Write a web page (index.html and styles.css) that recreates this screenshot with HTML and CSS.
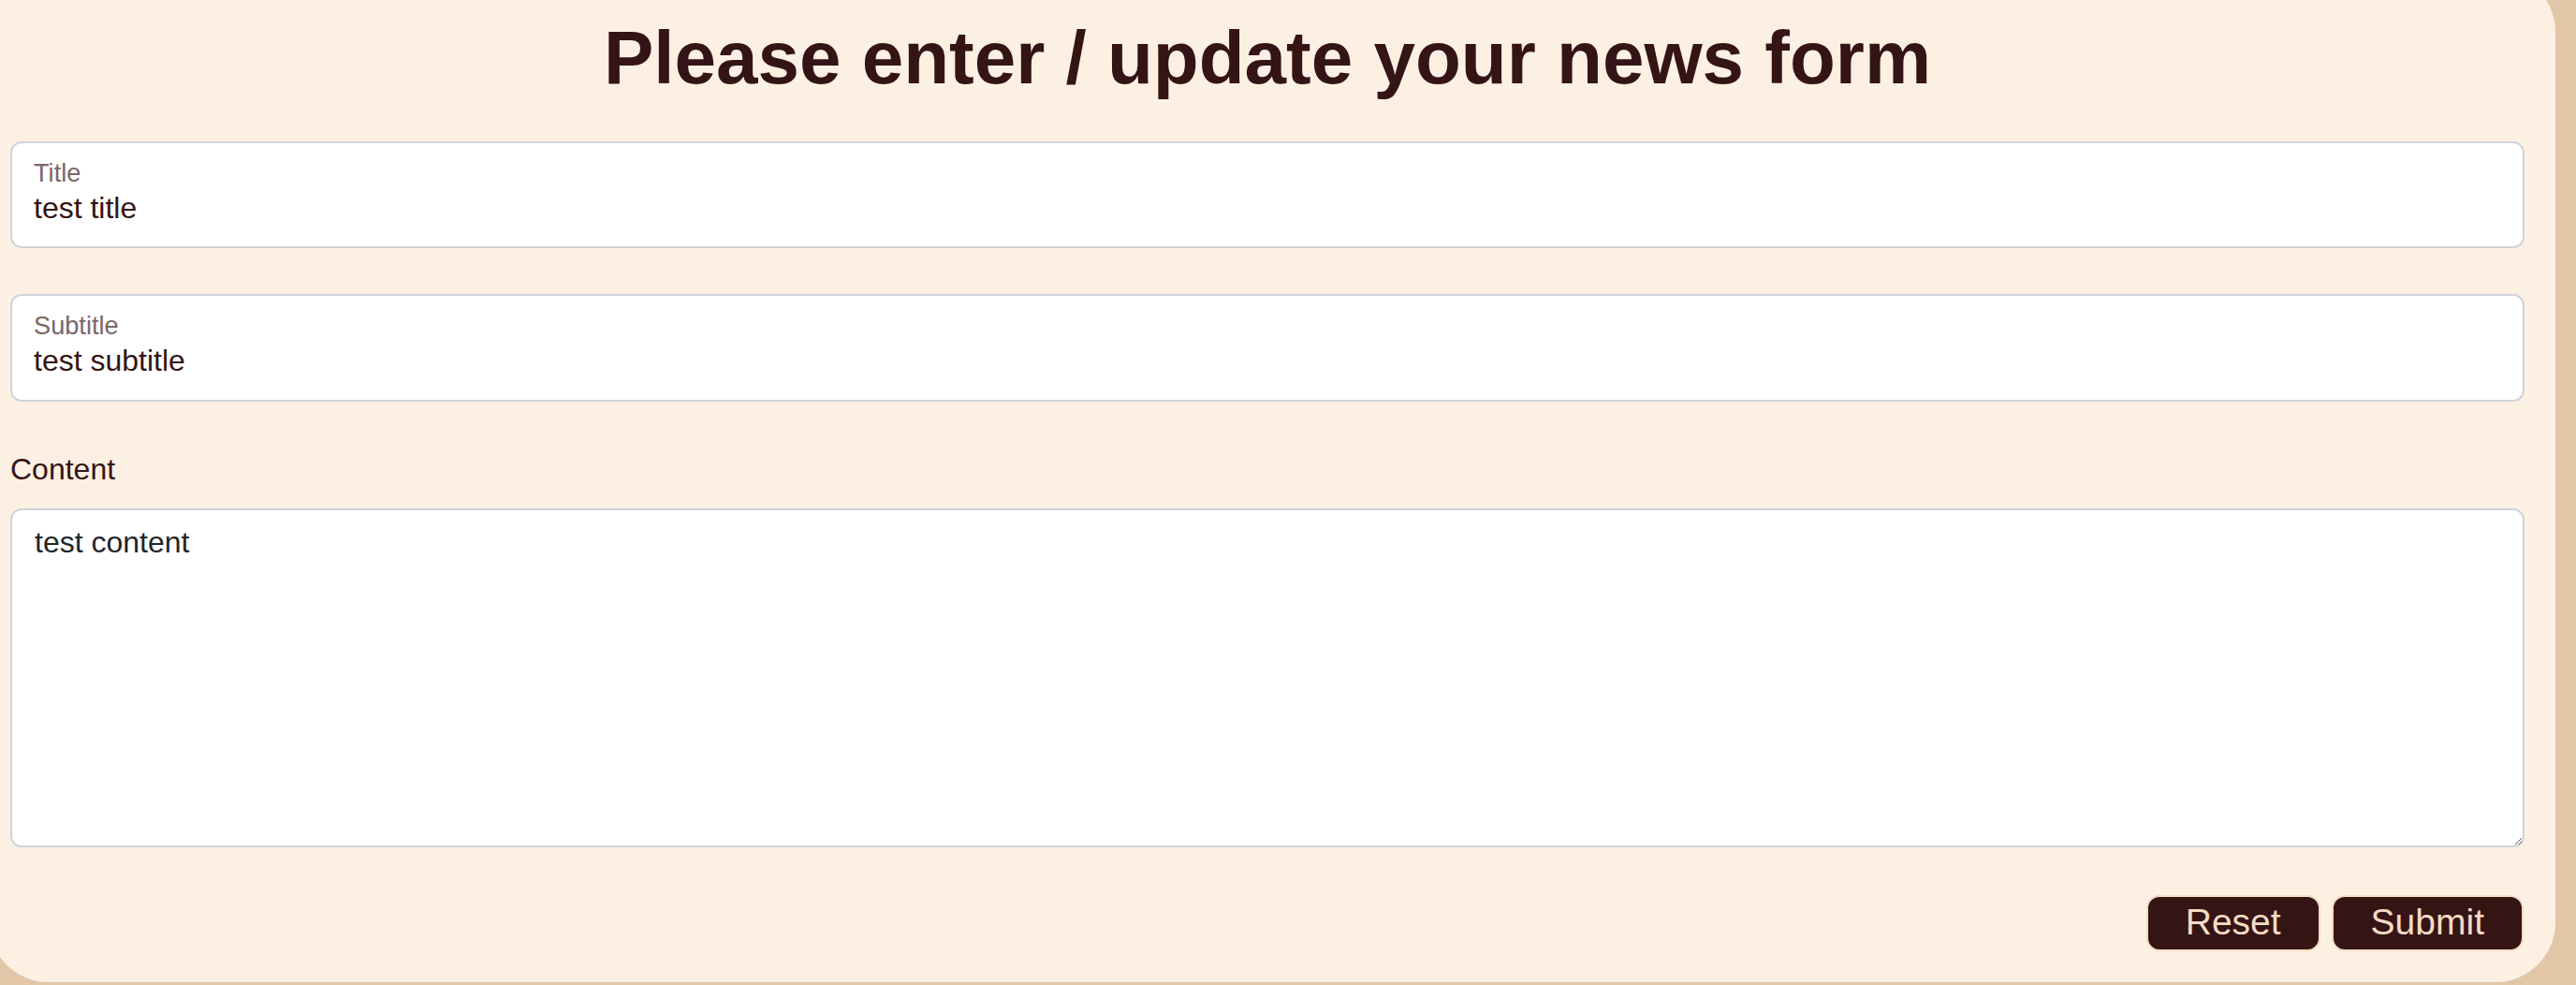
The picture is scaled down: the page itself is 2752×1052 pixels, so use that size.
FILE: index.html
```html
<!DOCTYPE html>
<html lang="en">
<head>
<meta charset="utf-8">
<title>News form</title>
<link rel="stylesheet" href="styles.css">
</head>
<body>
<main class="card">
  <h1 class="title">Please enter / update your news form</h1>
  <form class="news-form">
    <div class="field field-title">
      <label class="field-label" for="title">Title</label>
      <input class="field-input" id="title" type="text" value="test title">
    </div>
    <div class="field field-subtitle">
      <label class="field-label" for="subtitle">Subtitle</label>
      <input class="field-input" id="subtitle" type="text" value="test subtitle">
    </div>
    <label class="content-label" for="content">Content</label>
    <textarea class="content-area" id="content">test content</textarea>
    <div class="actions">
      <button type="reset" class="btn">Reset</button>
      <button type="submit" class="btn">Submit</button>
    </div>
  </form>
</main>
</body>
</html>
```

FILE: styles.css
```css
html, body {
  margin: 0;
  padding: 0;
}

body {
  height: 1052px;
  overflow: hidden;
  background: #e1c6a7;
  font-family: "Liberation Sans", Arial, Helvetica, sans-serif;
  color: #341414;
}

.card {
  box-sizing: border-box;
  margin: -30px 22px 0 -12px;
  padding: 44px 33px 33px 23px;
  background: #fcf0e3;
  border-radius: 64px;
}

.title {
  margin: 0 0 41px 0;
  font-size: 80px;
  line-height: 96px;
  font-weight: 700;
  text-align: center;
  color: #341414;
}

.news-form {
  display: flex;
  flex-direction: column;
  margin: 0;
}

.field {
  box-sizing: border-box;
  display: flex;
  flex-direction: column;
  height: 114px;
  padding: 18px 23px 0 23px;
  background: #ffffff;
  border: 2px solid #ced4da;
  border-radius: 12px;
}

.field-subtitle {
  height: 115px;
  margin-top: 49px;
}

.field-label {
  display: block;
  font-size: 27.2px;
  line-height: 27.2px;
  color: #7b6666;
}

.field-input {
  margin: 4px 0 0 0;
  padding: 0;
  height: 40px;
  border: 0;
  outline: none;
  background: transparent;
  font-family: inherit;
  font-size: 32px;
  line-height: 40px;
  color: #341414;
}

.content-label {
  display: block;
  margin-top: 48px;
  font-size: 32px;
  line-height: 48px;
  color: #341414;
}

.content-area {
  box-sizing: border-box;
  display: block;
  margin-top: 18px;
  height: 362px;
  width: 100%;
  padding: 10px 24px 12px 24px;
  border: 2px solid #ced4da;
  border-radius: 12px;
  background: #ffffff;
  font-family: inherit;
  font-size: 32px;
  line-height: 48px;
  color: #212529;
  resize: vertical;
  outline: none;
}

.actions {
  display: flex;
  justify-content: flex-end;
  gap: 12px;
  margin-top: 51px;
  padding-right: 1px;
}

.btn {
  box-sizing: border-box;
  height: 60px;
  padding: 0 40px 2px 40px;
  border: 2px solid #f3dcc4;
  border-radius: 14px;
  background: #351414;
  color: #f3dcc5;
  font-family: inherit;
  font-size: 39px;
  line-height: 54px;
  cursor: pointer;
}
```
